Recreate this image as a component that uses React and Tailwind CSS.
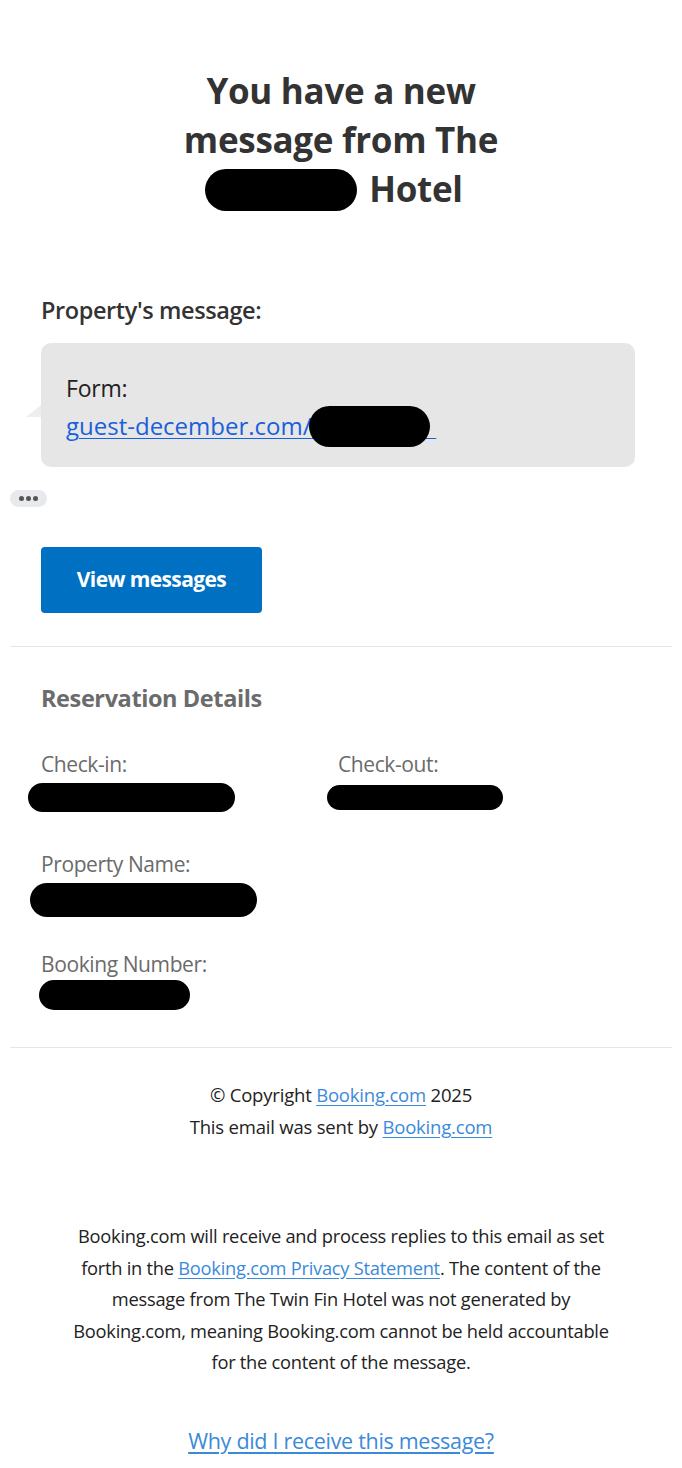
import React from 'react';

const font = { fontFamily: '"Open Sans", "Noto Sans", Arial, sans-serif' };

// Black marker scribble used to hide private values
const Blob = ({ className }) => <div className={`bg-black rounded-full ${className}`}></div>;

function Detail({ label, blob }) {
  return (
    <div>
      <div className="text-[21px] leading-[30px] text-[#6b6b6b] tracking-[-0.4px]">{label}</div>
      {blob}
    </div>
  );
}

export default function App() {
  return (
    <div className="bg-white min-h-[1468px] w-[682px] text-[#333]" style={font}>
      {/* Heading */}
      <div className="pt-[66px] flex justify-center">
        <h1 className="text-center text-[35px] leading-[49px] font-bold text-[#333] tracking-[-0.3px]">
          You have a new
          <br />
          message from The
          <br />
          <span className="inline-block align-middle w-[152px] h-[42px] bg-black rounded-full mr-[12px] -ml-[14px] -mt-[6px]"></span>
          Hotel
        </h1>
      </div>

      {/* Property's message */}
      <div className="px-[41px] pt-[82px]">
        <div className="text-[23.5px] leading-[30px] font-semibold text-[#333] tracking-[-0.4px]">Property's message:</div>
        <div className="relative mt-[18px] w-[594px] bg-[#e6e6e6] rounded-[10px] px-[25px] pt-[30px] pb-[26px]">
          <div className="absolute left-[-15px] top-[62px] w-0 h-0 border-l-[15px] border-l-transparent border-b-[12px] border-b-[#eeeeee]"></div>
          <div className="text-[23px] leading-[30px] text-[#222] tracking-[-0.2px]">Form:</div>
          <div className="mt-[8px] text-[24px] leading-[30px]">
            <a className="text-[#1a5fdc] underline decoration-1 underline-offset-[3px]">
              guest-december.com/
              <span className="relative text-transparent">
                XXXXXXXXX
                <span className="absolute left-[-3px] right-[6px] top-[-3px] bottom-[-5px] bg-black rounded-full"></span>
              </span>
            </a>
          </div>
        </div>
      </div>

      {/* ellipsis pill */}
      <div className="pl-[10px] mt-[23px]">
        <div className="w-[37px] h-[17px] rounded-full bg-[#e8e9ec] flex items-center justify-center gap-[2px]">
          <span className="w-[5px] h-[5px] rounded-full bg-[#555]"></span>
          <span className="w-[5px] h-[5px] rounded-full bg-[#555]"></span>
          <span className="w-[5px] h-[5px] rounded-full bg-[#555]"></span>
        </div>
      </div>

      {/* Button */}
      <div className="px-[41px] mt-[40px]">
        <button className="w-[221px] h-[66px] bg-[#0071c2] rounded-[4px] text-white text-[21px] font-bold tracking-[-0.6px]">
          View messages
        </button>
      </div>

      <div className="mx-[10px] mt-[33px] h-px bg-[#e6e6e6]"></div>

      {/* Reservation details */}
      <div className="px-[41px] pt-[36px]">
        <div className="text-[23.5px] leading-[30px] font-bold text-[#6b6b6b] tracking-[-0.4px]">Reservation Details</div>
        <div className="mt-[36px] flex">
          <div className="w-[297px]">
            <Detail label="Check-in:" blob={<Blob className="-ml-[13px] mt-[4px] w-[207px] h-[29px]" />} />
          </div>
          <Detail label="Check-out:" blob={<Blob className="-ml-[11px] mt-[6px] w-[176px] h-[25px]" />} />
        </div>
        <div className="mt-[37px]">
          <Detail label="Property Name:" blob={<Blob className="-ml-[11px] mt-[4px] w-[227px] h-[34px]" />} />
        </div>
        <div className="mt-[32px]">
          <Detail label="Booking Number:" blob={<Blob className="-ml-[2px] mt-[1px] w-[151px] h-[30px]" />} />
        </div>
      </div>

      <div className="mx-[10px] mt-[37px] h-px bg-[#e6e6e6]"></div>

      {/* Footer */}
      <div className="pt-[31px] text-center text-[18.5px] leading-[32px] text-[#222] tracking-[-0.2px]">
        <div>
          © Copyright <a className="text-[#3b8ad9] underline underline-offset-[3px]">Booking.com</a> 2025
        </div>
        <div>
          This email was sent by <a className="text-[#3b8ad9] underline underline-offset-[3px]">Booking.com</a>
        </div>
      </div>

      <div className="mt-[77px] flex justify-center">
        <p className="text-center text-[18.3px] leading-[31.5px] text-[#222] tracking-[-0.25px]">
          Booking.com will receive and process replies to this email as set
          <br />
          forth in the <a className="text-[#3b8ad9] underline underline-offset-[3px]">Booking.com Privacy Statement</a>. The content of the
          <br />
          message from The Twin Fin Hotel was not generated by
          <br />
          Booking.com, meaning Booking.com cannot be held accountable
          <br />
          for the content of the message.
        </p>
      </div>

      <div className="mt-[48px] pb-[14px] text-center">
        <a className="text-[21.5px] leading-[30px] text-[#3b8ad9] underline underline-offset-[3px] tracking-[-0.3px]">
          Why did I receive this message?
        </a>
      </div>
    </div>
  );
}
